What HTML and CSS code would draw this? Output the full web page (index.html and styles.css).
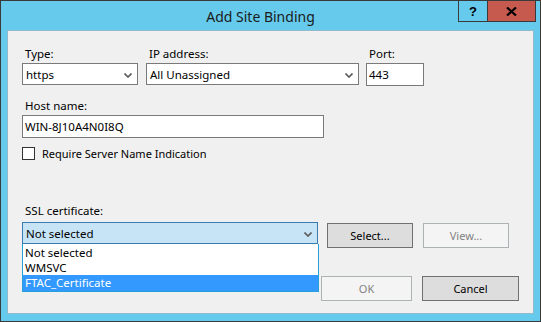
FILE: index.html
```html
<!DOCTYPE html>
<html>
<head>
<meta charset="utf-8">
<link rel="stylesheet" href="styles.css">
</head>
<body>
<div class="window">
  <div class="titlebar">
    <span class="title">Add Site Binding</span>
    <div class="caption-btns">
      <span class="cap-btn help">?</span>
      <span class="cap-btn close"><svg width="11" height="9" viewBox="0 0 11 9"><path d="M1 0.5 L10 8.5 M10 0.5 L1 8.5" stroke="#000" stroke-width="2.2"/></svg></span>
    </div>
  </div>
  <div class="client">
    <div class="row1">
      <div class="field f-type">
        <div class="lbl">Type:</div>
        <div class="combo">https<svg class="chev" width="8" height="5" viewBox="0 0 8 5"><path d="M0.5 0.5 L4 4 L7.5 0.5" fill="none" stroke="#5a5a5a" stroke-width="1.6"/></svg></div>
      </div>
      <div class="field f-ip">
        <div class="lbl">IP address:</div>
        <div class="combo">All Unassigned<svg class="chev" width="8" height="5" viewBox="0 0 8 5"><path d="M0.5 0.5 L4 4 L7.5 0.5" fill="none" stroke="#5a5a5a" stroke-width="1.6"/></svg></div>
      </div>
      <div class="field f-port">
        <div class="lbl">Port:</div>
        <div class="textbox port">443</div>
      </div>
    </div>
    <div class="field f-host">
      <div class="lbl">Host name:</div>
      <div class="textbox host">WIN-8J10A4N0I8Q</div>
    </div>
    <div class="check-row">
      <span class="checkbox"></span>
      <span class="check-lbl">Require Server Name Indication</span>
    </div>
    <div class="lbl ssl-lbl">SSL certificate:</div>
    <div class="ssl-row">
      <div class="combo ssl-combo">Not selected<svg class="chev" width="8" height="5" viewBox="0 0 8 5"><path d="M0.5 0.5 L4 4 L7.5 0.5" fill="none" stroke="#5a5a5a" stroke-width="1.6"/></svg>
        <div class="dropdown">
          <div class="opt">Not selected</div>
          <div class="opt">WMSVC</div>
          <div class="opt sel">FTAC_Certificate</div>
        </div>
      </div>
      <div class="btn btn-select">Select...</div>
      <div class="btn disabled btn-view">View...</div>
    </div>
    <div class="footer">
      <div class="btn disabled ok">OK</div>
      <div class="btn cancel">Cancel</div>
    </div>
  </div>
</div>
</body>
</html>
```
FILE: styles.css
```css
* { box-sizing: border-box; }
html, body { margin: 0; padding: 0; }
body {
  font-family: "Noto Sans", "Open Sans", sans-serif;
  font-size: 11px;
  color: #000;
}
.window {
  width: 541px;
  height: 322px;
  border: 1px solid #3a3a3a;
  background: #66caec;
  display: flex;
  flex-direction: column;
  padding: 0 6px 7px 6px;
}
.titlebar {
  height: 29px;
  position: relative;
  display: flex;
  align-items: center;
  justify-content: center;
  flex: none;
}
.title {
  font-size: 14px;
  color: #1a1a1a;
  margin-top: 2px;
  margin-right: 20px;
}
.caption-btns {
  position: absolute;
  top: -1px;
  right: -2px;
  display: flex;
}
.cap-btn {
  height: 22px;
  border: 1px solid #3a3a3a;
  display: flex;
  align-items: center;
  justify-content: center;
}
.help {
  width: 29px;
  border-right: none;
  font-weight: bold;
  font-size: 13px;
  font-family: "Liberation Sans", sans-serif;
  background: #66caec;
}
.close {
  width: 49px;
  background: #c75a4e;
}
.client {
  flex: 1;
  background: #f0f0f0;
  border: 1px solid #93b9cf;
  position: relative;
  padding: 15px 14px 0 14px;
  display: flex;
  flex-direction: column;
}
.lbl {
  line-height: 16px;
  height: 16px;
  padding-left: 3px;
  margin-bottom: 1px;
  white-space: nowrap;
  font-size: 11.5px;
}
.row1 {
  display: flex;
  align-items: flex-start;
}
.f-type { width: 116px; }
.f-ip { width: 213px; margin-left: 8px; }
.f-port { width: 58px; margin-left: 7px; }
.combo {
  height: 22px;
  border: 1px solid #7a7a7a;
  background: #fff;
  display: flex;
  align-items: center;
  padding-left: 3px;
  position: relative;
  white-space: nowrap;
  font-size: 11.5px;
}
.chev {
  position: absolute;
  right: 5px;
  top: 9px;
}
.textbox {
  height: 23px;
  border: 1px solid #7a7a7a;
  background: #fff;
  display: flex;
  align-items: center;
  padding-left: 2px;
  font-size: 11.5px;
}
.f-host { margin-top: 12px; }
.host { width: 302px; }
.check-row {
  margin-top: 9px;
  display: flex;
  align-items: center;
  height: 13px;
}
.checkbox {
  width: 13px;
  height: 13px;
  border: 1px solid #333;
  background: #fff;
  flex: none;
}
.check-lbl {
  margin-left: 7px;
  line-height: 15px;
  white-space: nowrap;
}
.ssl-lbl { margin-top: 43px; margin-bottom: 3px; }
.ssl-row {
  display: flex;
  align-items: flex-start;
}
.ssl-combo {
  width: 296px;
  background: #c6e4f6;
  border-color: #3c7bb0;
  flex: none;
}
.dropdown {
  position: absolute;
  left: -1px;
  top: 21px;
  width: 297px;
  border: 1px solid #26a0da;
  border-top: none;
  padding-top: 1px;
  background: #fff;
  z-index: 2;
  font-size: 11.5px;
}
.opt {
  height: 15px;
  line-height: 15px;
  padding-left: 2px;
  color: #000;
}
.opt.sel {
  background: #3399ff;
  color: #fff;
  height: 16px;
  line-height: 16px;
}
.btn {
  width: 86px;
  height: 25px;
  border: 1px solid #707070;
  background: #dddddd;
  display: flex;
  align-items: center;
  justify-content: center;
  margin-top: 1px;
  flex: none;
}
.btn-select { margin-left: 9px; }
.btn-view { margin-left: 10px; }
.btn.disabled {
  background: #f4f4f4;
  border-color: #adb2b5;
  color: #838383;
}
.footer {
  display: flex;
  justify-content: flex-end;
  margin-top: 27px;
}
.ok { width: 91px; }
.cancel { width: 97px; margin-left: 10px; }
```
